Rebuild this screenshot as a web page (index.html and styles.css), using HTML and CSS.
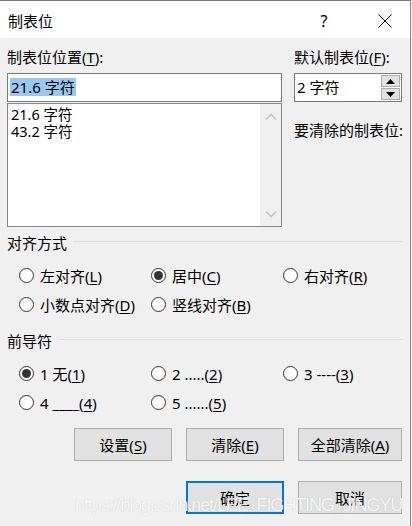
FILE: index.html
```html
<!DOCTYPE html>
<html lang="zh">
<head>
<meta charset="utf-8">
<title>制表位</title>
<link rel="stylesheet" href="styles.css">
</head>
<body>
<div class="window">
  <div class="titlebar">
    <span class="title">制表位</span>
    <span class="tb-help">?</span>
    <span class="tb-close">
      <svg width="14" height="14" viewBox="0 0 14 14"><path d="M0.5 0.5 L13.5 13.5 M13.5 0.5 L0.5 13.5" stroke="#000" stroke-width="1" fill="none"/></svg>
    </span>
  </div>
  <div class="content">
    <div class="top">
      <div class="col-left">
        <div class="label">制表位位置(<u>T</u>):</div>
        <div class="textbox"><span class="sel">21.6 字符</span></div>
        <div class="listbox">
          <div class="items">
            <div class="item">21.6 字符</div>
            <div class="item">43.2 字符</div>
          </div>
          <div class="vscroll">
            <svg width="12" height="8" viewBox="0 0 12 8"><path d="M1 6.5 L6 1.5 L11 6.5" stroke="#c4c4c4" stroke-width="1.6" fill="none"/></svg>
            <svg width="12" height="8" viewBox="0 0 12 8"><path d="M1 1.5 L6 6.5 L11 1.5" stroke="#c4c4c4" stroke-width="1.6" fill="none"/></svg>
          </div>
        </div>
      </div>
      <div class="col-right">
        <div class="label">默认制表位(<u>F</u>):</div>
        <div class="spinner">
          <span class="spin-text">2 字符</span>
          <span class="spin-btns">
            <span class="spin-btn"><svg width="9" height="5" viewBox="0 0 9 5"><path d="M0 5 L4.5 0 L9 5 Z" fill="#000"/></svg></span>
            <span class="spin-btn"><svg width="9" height="5" viewBox="0 0 9 5"><path d="M0 0 L9 0 L4.5 5 Z" fill="#000"/></svg></span>
          </span>
        </div>
        <div class="label clear-label">要清除的制表位:</div>
      </div>
    </div>

    <div class="group-head align-head"><span>对齐方式</span><span class="rule"></span></div>
    <div class="radios">
      <label class="radio"><span class="dot"></span>左对齐(<u>L</u>)</label>
      <label class="radio"><span class="dot on"></span>居中(<u>C</u>)</label>
      <label class="radio"><span class="dot"></span>右对齐(<u>R</u>)</label>
      <label class="radio"><span class="dot"></span>小数点对齐(<u>D</u>)</label>
      <label class="radio"><span class="dot"></span>竖线对齐(<u>B</u>)</label>
    </div>

    <div class="group-head lead-head"><span>前导符</span><span class="rule"></span></div>
    <div class="radios">
      <label class="radio"><span class="dot on"></span>1 无(<u>1</u>)</label>
      <label class="radio"><span class="dot"></span>2 .....(<u>2</u>)</label>
      <label class="radio"><span class="dot"></span>3 ----(<u>3</u>)</label>
      <label class="radio"><span class="dot"></span>4 ____(<u>4</u>)</label>
      <label class="radio"><span class="dot"></span>5 ......(<u>5</u>)</label>
    </div>

    <div class="btn-row row1">
      <span class="btn">设置(<u>S</u>)</span>
      <span class="btn">清除(<u>E</u>)</span>
      <span class="btn wide">全部清除(<u>A</u>)</span>
    </div>
    <div class="btn-row row2">
      <span class="btn default">确定</span>
      <span class="btn wide">取消</span>
    </div>
  </div>
  <div class="watermark">https://blog.csdn.net/LEE_FIGHTING_JINGYU</div>
</div>
</body>
</html>
```
FILE: styles.css
```css
* { box-sizing: border-box; }
html, body {
  margin: 0;
  padding: 0;
  background: #f0f0f0;
}
body {
  font-family: "Noto Sans", "Noto Sans CJK SC", sans-serif;
  font-size: 15px;
  color: #000;
  width: 412px;
  height: 526px;
  overflow: hidden;
}
u { text-decoration: underline; text-underline-offset: 2px; }

.window {
  position: relative;
  width: 411px;
  height: 526px;
  border-top: 1px solid #7a7a7a;
  border-right: 1px solid #8a8a8a;
  background: #f0f0f0;
}

.titlebar {
  height: 37px;
  background: #fff;
  display: flex;
  align-items: center;
  padding-left: 8px;
  padding-right: 2px;
  padding-top: 2px;
}
.title { flex: 1; font-size: 15px; line-height: 20px; }
.tb-help {
  width: 46px;
  text-align: center;
  font-size: 16px;
  line-height: 20px;
  margin-right: 15px;
}
.tb-close {
  width: 46px;
  display: flex;
  justify-content: center;
  align-items: center;
}

.content {
  padding: 0 8px 0 7px;
}

.top {
  display: flex;
  gap: 12px;
}
.col-left { width: 275px; }
.col-right { width: 108px; }

.label {
  margin-top: 9px;
  height: 20px;
  line-height: 20px;
  white-space: nowrap;
}
.clear-label { margin-top: 18px; }

.textbox {
  margin-top: 6px;
  height: 29px;
  background: #fff;
  border: 1px solid #7a7a7a;
  padding: 4px 2px 0 2px;
  line-height: 18px;
}
.sel {
  background: #99c9ef;
  display: inline-block;
  height: 18px;
  padding: 0 1px;
}

.listbox {
  margin-top: 1px;
  height: 124px;
  border: 1px solid #828790;
  background: #fff;
  display: flex;
}
.items {
  flex: 1;
  padding: 2px 0 0 3px;
  font-size: 14.5px;
}
.item { line-height: 17px; height: 17px; }
.vscroll {
  width: 21px;
  background: #f0f0f0;
  display: flex;
  flex-direction: column;
  justify-content: space-between;
  align-items: center;
  padding: 9px 0 8px 0;
}

.spinner {
  margin-top: 6px;
  height: 29px;
  background: #fff;
  border: 1px solid #7a7a7a;
  display: flex;
}
.spin-text {
  flex: 1;
  padding: 4px 0 0 2px;
  line-height: 18px;
}
.spin-btns {
  display: flex;
  flex-direction: column;
  width: 20px;
  padding: 1px 1px 1px 0;
  gap: 1px;
}
.spin-btn {
  flex: 1;
  background: #e1e1e1;
  border: 1px solid #adadad;
  display: flex;
  align-items: center;
  justify-content: center;
}

.group-head {
  display: flex;
  align-items: center;
  height: 20px;
  line-height: 20px;
}
.group-head .rule {
  flex: 1;
  height: 1px;
  background: #dcdcdc;
  margin-left: 6px;
  margin-top: -3px;
}
.align-head { margin-top: 6px; }
.lead-head { margin-top: 12px; }

.radios {
  margin-top: 8px;
  padding-left: 12px;
  display: grid;
  grid-template-columns: 132px 132px auto;
  grid-auto-rows: 29px;
}
.radio {
  display: flex;
  align-items: center;
  white-space: nowrap;
}
.dot {
  width: 15px;
  height: 15px;
  border: 1px solid #333;
  border-radius: 50%;
  background: #fff;
  margin-right: 6px;
  display: flex;
  align-items: center;
  justify-content: center;
  flex: none;
}
.dot.on::after {
  content: "";
  width: 9px;
  height: 9px;
  border-radius: 50%;
  background: #333;
}

.btn-row {
  display: flex;
  justify-content: flex-end;
  gap: 14px;
}
.row1 { margin-top: 11px; }
.row2 { margin-top: 20px; }
.btn {
  width: 98px;
  height: 33px;
  background: #e1e1e1;
  border: 1px solid #adadad;
  display: flex;
  align-items: center;
  justify-content: center;
  white-space: nowrap;
}
.btn.wide { width: 104px; }
.btn.default {
  border: 2px solid #0078d7;
}

.watermark {
  position: absolute;
  left: 75px;
  top: 494px;
  font-family: "Liberation Sans", Arial, sans-serif;
  font-size: 18px;
  letter-spacing: -1.1px;
  color: rgba(255, 255, 255, 0.85);
  text-shadow: 0 0 1px rgba(120, 120, 120, 0.35);
  white-space: nowrap;
  pointer-events: none;
}
```
